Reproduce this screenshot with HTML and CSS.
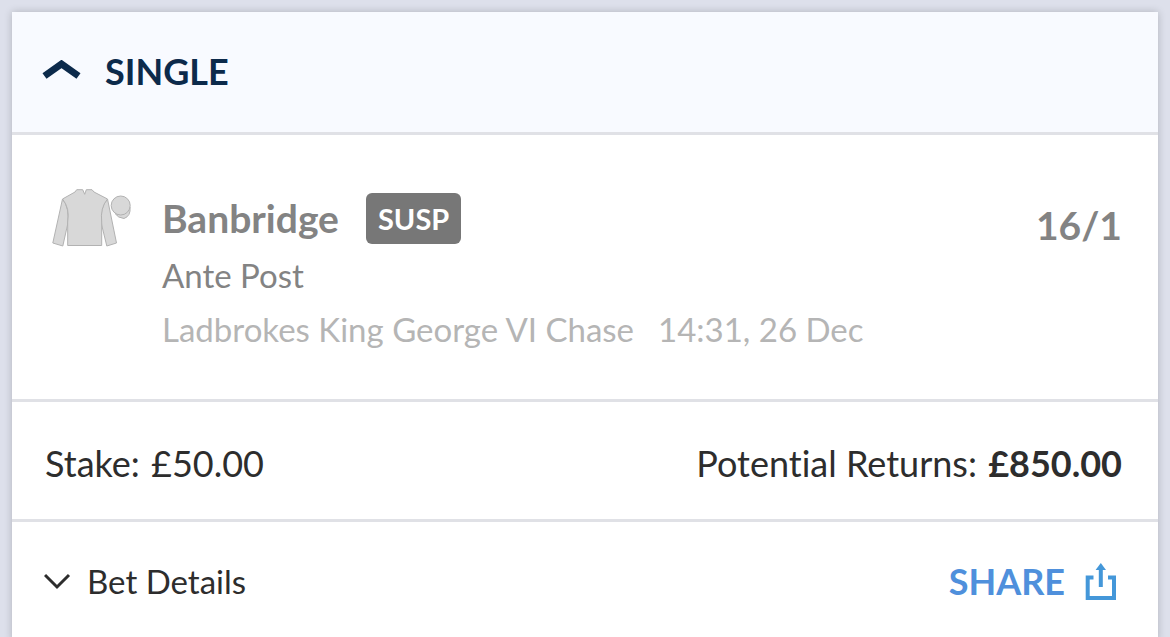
FILE: index.html
```html
<!DOCTYPE html>
<html lang="en">
<head>
  <meta charset="UTF-8">
  <meta name="viewport" content="width=device-width, initial-scale=1">
  <title>My Bets</title>
  <link rel="stylesheet" href="styles.css">
</head>
<body>

  <main class="bet-card">
    <button class="card-header" type="button" aria-expanded="true">
      <svg class="chevron-up" viewBox="0 0 40 22" aria-hidden="true">
        <path d="M2.5 16 L19.5 4 L36.5 16"/>
      </svg>
      <span>SINGLE</span>
    </button>

    <section class="selection">
      <!-- Jockey silk and cap -->
      <svg class="silk" viewBox="0 0 80 60" aria-hidden="true">
        <path d="M10.5 11 L0.8 55 L10.8 58 L15.5 37 Q18 20 10.5 11 Z"/>
        <path d="M55.5 11 L64.5 55 L54.8 58 L49.7 37 Q47 20 55.5 11 Z"/>
        <path d="M24.7 1.7 H30.7 L32.7 6.3 L34.3 1.7 H40 L42 4 L55.5 11 Q48 20 49.7 34 V57.5 H15.7 V34 Q18 20 10.5 11 L23 4 Z"/>
        <path d="M78 19 Q79 28 72 30.5 Q66 30 63 25.5 Z"/>
        <circle cx="68.7" cy="17.5" r="9.5"/>
      </svg>
      <div class="details">
        <div class="name-row">
          <h1 class="name">Banbridge</h1>
          <span class="badge">SUSP</span>
        </div>
        <p class="market">Ante Post</p>
        <p class="event"><span>Ladbrokes King George VI Chase</span><time>14:31, 26 Dec</time></p>
      </div>
      <span class="odds">16/1</span>
    </section>

    <section class="totals">
      <span>Stake: <span class="amount">£50.00</span></span>
      <span>Potential Returns: <strong class="amount">£850.00</strong></span>
    </section>

    <footer class="actions">
      <button class="bet-details" type="button" aria-expanded="false">
        <svg class="chevron-down" viewBox="0 0 28 18" aria-hidden="true">
          <path d="M1 3 L13 15 L25 3"/>
        </svg>
        <span>Bet Details</span>
      </button>
      <button class="share" type="button">
        <span>SHARE</span>
        <svg class="share-icon" viewBox="0 0 32 38" aria-hidden="true">
          <path d="M8.5 15.5 H2.7 V36 H29 V15.5 H23 M15.8 25 V7"/>
          <path class="arrow-head" d="M15.8 1 L21 8 H10.6 Z"/>
        </svg>
      </button>
    </footer>
  </main>

</body>
</html>
```

FILE: styles.css
```css
* {
  box-sizing: border-box;
}

body {
  margin: 0;
  padding: 12px 12px 0;
  background-color: #dde0eb;
  color: #2d2d2d;
  font-family: Lato, "Liberation Sans", sans-serif;
  font-size: 36px;
  font-variant-ligatures: none;
  line-height: 48px;
}

h1, p {
  margin: 0;
}

button {
  padding: 0;
  border: none;
  background: none;
  color: inherit;
  font: inherit;
  font-variant-ligatures: none;
  cursor: pointer;
}

svg {
  flex: none;
  fill: none;
  stroke: currentColor;
}

.bet-card {
  min-height: calc(100vh - 12px);
  background-color: #fff;
  box-shadow: 0 0 8px rgba(0, 0, 0, 0.2);
}

.card-header {
  display: flex;
  align-items: center;
  gap: 23px;
  width: 100%;
  padding: 35px 30px 37px;
  border-bottom: 3px solid #e0e1e6;
  background-color: #f8faff;
  color: #0c2a4b;
  font-weight: 700;
}

.chevron-up {
  width: 40px;
  height: 22px;
  stroke-width: 7;
}

.selection {
  display: flex;
  align-items: flex-start;
  padding: 53px 36px 43px 40px;
  border-bottom: 3px solid #e0e1e6;
  color: #838383;
}

.silk {
  width: 80px;
  height: 60px;
  margin-right: 30px;
  fill: #d8d8d8;
  stroke: #b2b2b2;
}

.details {
  flex: 1;
}

.name-row {
  display: flex;
  align-items: center;
  gap: 27px;
}

.name {
  font-size: 39px;
  line-height: 60px;
}

.badge {
  padding: 0 12px;
  border-radius: 6px;
  background-color: #777;
  color: #fff;
  font-size: 29px;
  font-weight: 700;
  line-height: 51px;
}

.market,
.event {
  font-size: 33px;
  line-height: 54px;
}

.event {
  display: flex;
  gap: 24px;
  color: #b5b5b5;
}

.odds {
  font-size: 39px;
  font-weight: 700;
  line-height: 74px;
}

.totals {
  display: flex;
  justify-content: space-between;
  padding: 37px 36px 32px 33px;
  border-bottom: 3px solid #e0e1e6;
}

.amount {
  margin-left: 2px;
}

.actions {
  display: flex;
  justify-content: space-between;
  padding: 35px 41px 36px 32px;
}

.bet-details,
.share {
  display: flex;
  align-items: center;
}

.bet-details {
  gap: 15px;
  font-size: 33px;
  line-height: 46px;
}

.chevron-down {
  width: 28px;
  height: 18px;
  stroke-width: 3;
}

.share {
  gap: 20px;
  color: #4f90dc;
  font-weight: 700;
}

.share-icon {
  width: 32px;
  height: 38px;
  stroke: #4497d9;
  stroke-width: 4;
}

.arrow-head {
  fill: #4497d9;
  stroke: none;
}
```
